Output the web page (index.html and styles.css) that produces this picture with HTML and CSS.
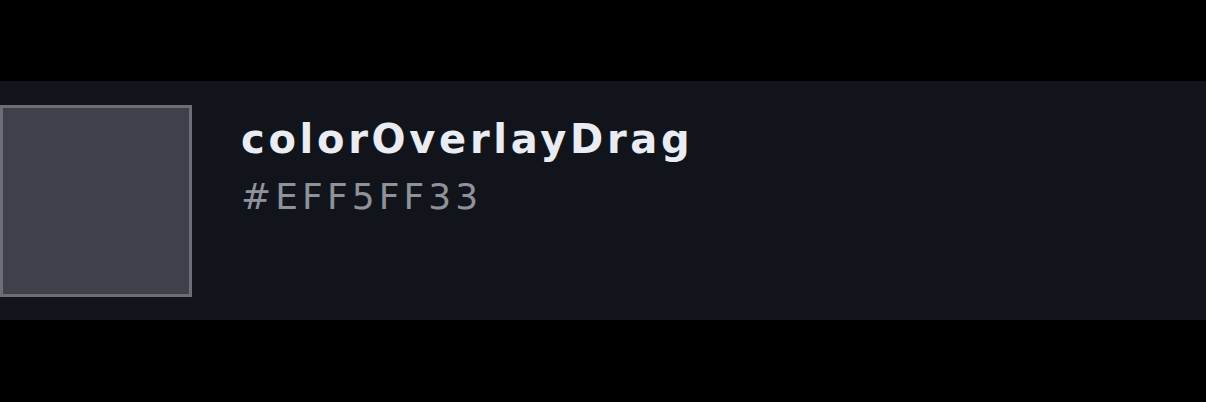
FILE: index.html
```html
<!DOCTYPE html>
<html>
<head>
<meta charset="utf-8">
<link rel="stylesheet" href="styles.css">
</head>
<body>
<div class="page">
  <div class="row">
    <div class="swatch"></div>
    <div class="info">
      <div class="name">colorOverlayDrag</div>
      <div class="hex">#EFF5FF33</div>
    </div>
  </div>
</div>
</body>
</html>
```
FILE: styles.css
```css
html, body {
  margin: 0;
  padding: 0;
  background: #000;
}
.page {
  padding-top: 81px;
  height: 402px;
  box-sizing: border-box;
}
.row {
  display: flex;
  align-items: flex-start;
  gap: 49px;
  background: #11141b;
  padding: 24px 0 23px 0;
}
.swatch {
  width: 192px;
  height: 192px;
  box-sizing: border-box;
  border: 3px solid #6b6e76;
  background: #3e414a;
  flex-shrink: 0;
}
.info {
  display: flex;
  flex-direction: column;
  font-family: "DejaVu Sans", sans-serif;
  padding-top: 8px;
}
.name {
  font-weight: 700;
  font-size: 40px;
  line-height: 52px;
  letter-spacing: 3.7px;
  color: #e9edf3;
}
.hex {
  margin-top: 9px;
  font-size: 36px;
  line-height: 46px;
  letter-spacing: 4.1px;
  color: #8f929a;
}
```
